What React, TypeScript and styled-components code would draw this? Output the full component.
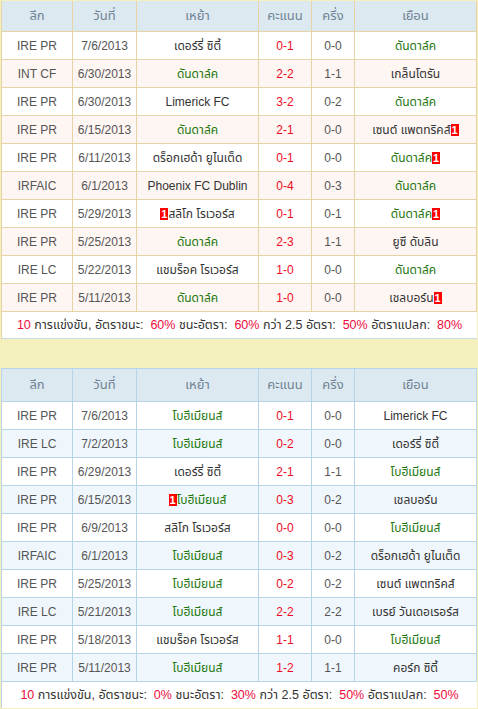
import React from "react";
import styled, { createGlobalStyle } from "styled-components";

const Global = createGlobalStyle`
  html, body { margin: 0; padding: 0; background: #f4f0bd; }
  body { font-family: Tahoma, "Liberation Sans", "Noto Sans", "Noto Sans Thai", sans-serif; }
`;

type Theme = {
  border: string;
  alt: string;
};

const brown: Theme = { border: "#e6d3a6", alt: "#fef6f3" };
const blue: Theme = { border: "#b8d5e8", alt: "#f0f7fc" };

const Page = styled.div`
  width: 478px;
  height: 709px;
  box-sizing: border-box;
  padding: 1px 1px 0 1px;
  background: #f4f0bd;
  display: flex;
  flex-direction: column;
`;

const Table = styled.div<{ $t: Theme }>`
  display: flex;
  flex-direction: column;
  border-left: 1px solid ${(p) => p.$t.border};
  background: #fff;
`;

const Gap = styled.div`
  height: 29px;
  background: #f4f0bd;
`;

const cols = "71px 64px 122px 53px 43px 122px";

const HeadRow = styled.div<{ $t: Theme; $h: number; $top: boolean }>`
  display: grid;
  grid-template-columns: ${cols};
  height: ${(p) => p.$h}px;
  box-sizing: border-box;
  background: #dde9f1;
  border-top: ${(p) => (p.$top ? `1px solid ${p.$t.border}` : "none")};
  border-bottom: 1px solid ${(p) => p.$t.border};
`;

const HeadCell = styled.div<{ $t: Theme }>`
  display: flex;
  align-items: center;
  justify-content: center;
  border-right: 1px solid ${(p) => p.$t.border};
  color: #6f8294;
  font-size: 13px;
`;

const Row = styled.div<{ $t: Theme; $alt: boolean }>`
  display: grid;
  grid-template-columns: ${cols};
  height: 28px;
  box-sizing: border-box;
  background: ${(p) => (p.$alt ? p.$t.alt : "#fff")};
  border-bottom: 1px solid ${(p) => p.$t.border};
`;

const Cell = styled.div<{ $t: Theme; $kind?: "muted" | "score" | "team" }>`
  display: flex;
  align-items: center;
  justify-content: center;
  border-right: 1px solid ${(p) => p.$t.border};
  font-size: 12px;
  white-space: nowrap;
  overflow: hidden;
  color: ${(p) =>
    p.$kind === "score" ? "#ee0a24" : p.$kind === "team" ? "#333" : "#555"};
`;

const Team = styled.span<{ $hl: boolean }>`
  color: ${(p) => (p.$hl ? "#23780f" : "#333")};
  display: inline-flex;
  align-items: center;
`;

const Badge = styled.span`
  display: inline-block;
  background: #f00;
  color: #fff;
  font-family: "Liberation Sans", Arial, sans-serif;
  font-weight: bold;
  font-size: 11px;
  line-height: 12px;
  height: 12px;
  padding: 0 1px;
`;

const Summary = styled.div<{ $h: number; $bottom?: string }>`
  height: ${(p) => p.$h}px;
  box-sizing: border-box;
  display: flex;
  align-items: center;
  justify-content: center;
  background: #fff;
  font-size: 12.5px;
  color: #333;
  border-bottom: ${(p) => (p.$bottom ? `1px solid ${p.$bottom}` : "none")};
  white-space: pre;
`;

const Num = styled.span`
  color: #ee0a3c;
`;

type TeamT = { name: string; hl?: boolean; pre?: boolean; post?: boolean };
type Match = [string, string, TeamT, string, string, TeamT];

const D: TeamT = { name: "ดันดาล์ค", hl: true };
const B: TeamT = { name: "โบฮีเมียนส์", hl: true };

const t1: Match[] = [
  ["IRE PR", "7/6/2013", { name: "เดอร์รี่ ซิตี้" }, "0-1", "0-0", D],
  ["INT CF", "6/30/2013", D, "2-2", "1-1", { name: "เกล็นโตรัน" }],
  ["IRE PR", "6/30/2013", { name: "Limerick FC" }, "3-2", "0-2", D],
  ["IRE PR", "6/15/2013", D, "2-1", "0-0", { name: "เซนต์ แพตทริคส์", post: true }],
  ["IRE PR", "6/11/2013", { name: "ดร็อกเฮด้า ยูไนเต็ด" }, "0-1", "0-0", { ...D, post: true }],
  ["IRFAIC", "6/1/2013", { name: "Phoenix FC Dublin" }, "0-4", "0-3", D],
  ["IRE PR", "5/29/2013", { name: "สลิโก โรเวอร์ส", pre: true }, "0-1", "0-1", { ...D, post: true }],
  ["IRE PR", "5/25/2013", D, "2-3", "1-1", { name: "ยูซี ดับลิน" }],
  ["IRE LC", "5/22/2013", { name: "แชมร็อค โรเวอร์ส" }, "1-0", "0-0", D],
  ["IRE PR", "5/11/2013", D, "1-0", "0-0", { name: "เชลบอร์น", post: true }],
];

const t2: Match[] = [
  ["IRE PR", "7/6/2013", B, "0-1", "0-0", { name: "Limerick FC" }],
  ["IRE LC", "7/2/2013", B, "0-2", "0-0", { name: "เดอร์รี่ ซิตี้" }],
  ["IRE PR", "6/29/2013", { name: "เดอร์รี่ ซิตี้" }, "2-1", "1-1", B],
  ["IRE PR", "6/15/2013", { ...B, pre: true }, "0-3", "0-2", { name: "เชลบอร์น" }],
  ["IRE PR", "6/9/2013", { name: "สลิโก โรเวอร์ส" }, "0-0", "0-0", B],
  ["IRFAIC", "6/1/2013", B, "0-3", "0-2", { name: "ดร็อกเฮด้า ยูไนเต็ด" }],
  ["IRE PR", "5/25/2013", B, "0-2", "0-2", { name: "เซนต์ แพตทริคส์" }],
  ["IRE LC", "5/21/2013", B, "2-2", "2-2", { name: "เบรย์ วันเดอเรอร์ส" }],
  ["IRE PR", "5/18/2013", { name: "แชมร็อค โรเวอร์ส" }, "1-1", "0-0", B],
  ["IRE PR", "5/11/2013", B, "1-2", "1-1", { name: "คอร์ก ซิตี้" }],
];

const heads = ["ลีก", "วันที่", "เหย้า", "คะแนน", "ครึ่ง", "เยือน"];

function TeamView({ t }: { t: TeamT }) {
  return (
    <Team $hl={!!t.hl}>
      {t.pre && <Badge>1</Badge>}
      {t.name}
      {t.post && <Badge>1</Badge>}
    </Team>
  );
}

function MatchTable({
  theme,
  rows,
  headH,
  top,
  stats,
  sumH,
  sumBottom,
}: {
  theme: Theme;
  rows: Match[];
  headH: number;
  top: boolean;
  stats: string[];
  sumH: number;
  sumBottom?: string;
}) {
  return (
    <Table $t={theme}>
      <HeadRow $t={theme} $h={headH} $top={top}>
        {heads.map((h) => (
          <HeadCell key={h} $t={theme}>
            {h}
          </HeadCell>
        ))}
      </HeadRow>
      {rows.map((r, i) => (
        <Row key={i} $t={theme} $alt={i % 2 === 1}>
          <Cell $t={theme}>{r[0]}</Cell>
          <Cell $t={theme}>{r[1]}</Cell>
          <Cell $t={theme} $kind="team">
            <TeamView t={r[2]} />
          </Cell>
          <Cell $t={theme} $kind="score">
            {r[3]}
          </Cell>
          <Cell $t={theme}>{r[4]}</Cell>
          <Cell $t={theme} $kind="team">
            <TeamView t={r[5]} />
          </Cell>
        </Row>
      ))}
      <Summary $h={sumH} $bottom={sumBottom}>
        <Num>10</Num>
        {" การแข่งขัน, อัตราชนะ:  "}
        <Num>{stats[0]}</Num>
        {" ชนะอัตรา:  "}
        <Num>{stats[1]}</Num>
        {" กว่า 2.5 อัตรา:  "}
        <Num>{stats[2]}</Num>
        {" อัตราแปลก:  "}
        <Num>{stats[3]}</Num>
      </Summary>
    </Table>
  );
}

export default function App() {
  return (
    <>
      <Global />
      <Page>
        <MatchTable
          theme={brown}
          rows={t1}
          headH={31}
          top={false}
          stats={["60%", "60%", "50%", "80%"]}
          sumH={27}
          sumBottom="#c6dbe9"
        />
        <Gap />
        <MatchTable
          theme={blue}
          rows={t2}
          headH={34}
          top={true}
          stats={["0%", "30%", "50%", "50%"]}
          sumH={26}
        />
      </Page>
    </>
  );
}
